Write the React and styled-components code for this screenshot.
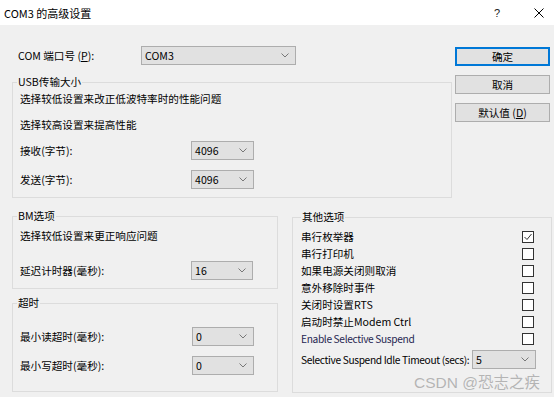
import React from 'react';
import styled, { createGlobalStyle } from 'styled-components';

const GlobalStyle = createGlobalStyle`
  html, body {
    margin: 0;
    padding: 0;
    background: #f0f0f0;
  }
  body {
    font-family: "Noto Sans CJK SC", "Noto Sans", sans-serif;
    font-size: 10.6px;
    color: #000;
  }
`;

const Window = styled.div`
  position: relative;
  width: 554px;
  height: 397px;
  background: #f0f0f0;
  overflow: hidden;
`;

const TitleBar = styled.div`
  height: 25px;
  background: #fff;
  display: flex;
  align-items: center;
  padding-left: 4px;
  font-size: 11px;
`;

const Title = styled.div`
  flex: 1;
`;

const TitleButton = styled.div`
  width: 30px;
  height: 25px;
  display: flex;
  align-items: center;
  justify-content: center;
  margin-right: ${props => props.$gap || 0}px;
  font-family: "Liberation Sans", sans-serif;
  font-size: 11px;
  color: #222;
`;

const Body = styled.div`
  padding: 0 2px 0 12px;
`;

const TopRow = styled.div`
  display: flex;
`;

const TopLeft = styled.div`
  width: 440px;
`;

const ComRow = styled.div`
  display: flex;
  align-items: center;
  height: 19px;
  margin-top: 21px;
  padding-left: 6px;
`;

const Label = styled.div`
  width: ${props => props.$width}px;
  flex-shrink: 0;
`;

const Latin = styled.span`
  white-space: nowrap;
  font-size: 10.2px;
  letter-spacing: -0.35px;
`;

const SelectBox = styled.div`
  width: ${props => props.$width}px;
  height: 19px;
  flex-shrink: 0;
  box-sizing: border-box;
  background: #e1e1e1;
  border: 1px solid #adadad;
  display: flex;
  align-items: center;
  justify-content: space-between;
  padding: 0 6px 0 3px;
  margin-left: ${props => (props.$push ? 'auto' : '0')};
  margin-right: ${props => props.$mr || 0}px;
`;

const Group = styled.fieldset`
  margin: ${props => props.$mt || 0}px 0 0 0;
  padding: 0 ${props => props.$pr || 7}px ${props => props.$pb}px ${props => props.$pl || 7}px;
  border: 1px solid #dcdcdc;
  min-width: 0;
`;

const Legend = styled.legend`
  padding: 0 1px;
  margin-left: ${props => props.$offset}px;
  line-height: 16px;
`;

const Line = styled.div`
  line-height: 18px;
  margin-top: ${props => props.$mt}px;
`;

const FieldRow = styled.div`
  display: flex;
  align-items: center;
  height: 19px;
  margin-top: ${props => props.$mt}px;
`;

const ButtonCol = styled.div`
  display: flex;
  flex-direction: column;
  gap: 9px;
  margin: 22px 0 0 3px;
`;

const Button = styled.div`
  width: 95px;
  height: 19px;
  box-sizing: border-box;
  background: #e1e1e1;
  border: 1px solid ${props => (props.$default ? '#0078d7' : '#adadad')};
  box-shadow: ${props => (props.$default ? 'inset 0 0 0 1px #0078d7' : 'none')};
  display: flex;
  align-items: center;
  justify-content: center;
`;

const BottomRow = styled.div`
  display: flex;
  margin-top: 10px;
`;

const BottomLeft = styled.div`
  width: 266px;
`;

const BottomRight = styled.div`
  width: 260px;
  margin: 1px 0 0 14px;
`;

const OptionList = styled.div`
  padding-top: 3px;
`;

const OptionRow = styled.div`
  height: 17px;
  display: flex;
  align-items: center;
  justify-content: space-between;
  color: ${props => props.$color || '#000'};
`;

const Check = styled.div`
  width: 12px;
  height: 12px;
  box-sizing: border-box;
  border: 1px solid #333;
  background: #fff;
  display: flex;
  align-items: center;
  justify-content: center;
`;

const Watermark = styled.div`
  position: absolute;
  right: 14px;
  bottom: 5px;
  font-family: "Liberation Sans", "Noto Sans CJK SC", sans-serif;
  font-size: 15.5px;
  line-height: 18px;
  color: rgba(140, 140, 140, 0.6);
`;

const Chevron = () => (
  <svg width="8" height="5" viewBox="0 0 8 5">
    <polyline points="0.5,0.5 4,4 7.5,0.5" fill="none" stroke="#777" strokeWidth="1" />
  </svg>
);

const Select = ({ value, width, ...rest }) => (
  <SelectBox $width={width} {...rest}>
    <span>{value}</span>
    <Chevron />
  </SelectBox>
);

const CheckBox = ({ checked }) => (
  <Check>
    {checked && (
      <svg width="10" height="10" viewBox="0 0 10 10">
        <polyline points="1.5,5 4,7.5 8.5,2" fill="none" stroke="#333" strokeWidth="1" />
      </svg>
    )}
  </Check>
);

const options = [
  { label: '串行枚举器', checked: true },
  { label: '串行打印机' },
  { label: '如果电源关闭则取消' },
  { label: '意外移除时事件' },
  { label: '关闭时设置RTS' },
  { label: '启动时禁止Modem Ctrl' },
  { label: 'Enable Selective Suspend', color: '#262650', latin: true },
];

const App = () => {
  return (
    <Window>
      <GlobalStyle />
      <TitleBar>
        <Title>COM3 的高级设置</Title>
        <TitleButton $gap={12}>?</TitleButton>
        <TitleButton>
          <svg width="10" height="10" viewBox="0 0 10 10">
            <path d="M0.5 0.5 L9.5 9.5 M9.5 0.5 L0.5 9.5" stroke="#000" strokeWidth="1" />
          </svg>
        </TitleButton>
      </TitleBar>
      <Body>
        <TopRow>
          <TopLeft>
            <ComRow>
              <Label $width={123}>COM 端口号 (<u>P</u>):</Label>
              <Select value="COM3" width={155} />
            </ComRow>
            <Group $mt={9} $pb={8}>
              <Legend $offset={-3}>USB传输大小</Legend>
              <Line $mt={0}>选择较低设置来改正低波特率时的性能问题</Line>
              <Line $mt={8}>选择较高设置来提高性能</Line>
              <FieldRow $mt={7}>
                <Label $width={171}>接收(字节):</Label>
                <Select value="4096" width={63} />
              </FieldRow>
              <FieldRow $mt={10}>
                <Label $width={171}>发送(字节):</Label>
                <Select value="4096" width={63} />
              </FieldRow>
            </Group>
          </TopLeft>
          <ButtonCol>
            <Button $default>确定</Button>
            <Button>取消</Button>
            <Button>默认值 (<u>D</u>)</Button>
          </ButtonCol>
        </TopRow>
        <BottomRow>
          <BottomLeft>
            <Group $pb={8}>
              <Legend $offset={-3}>BM选项</Legend>
              <Line $mt={3}>选择较低设置来更正响应问题</Line>
              <FieldRow $mt={16}>
                <Label $width={171}>延迟计时器(毫秒):</Label>
                <Select value="16" width={62} />
              </FieldRow>
            </Group>
            <Group $mt={6} $pb={16}>
              <Legend $offset={-3}>超时</Legend>
              <FieldRow $mt={16}>
                <Label $width={172}>最小读超时(毫秒):</Label>
                <Select value="0" width={62} />
              </FieldRow>
              <FieldRow $mt={10}>
                <Label $width={172}>最小写超时(毫秒):</Label>
                <Select value="0" width={62} />
              </FieldRow>
            </Group>
          </BottomLeft>
          <BottomRight>
            <Group $pl={8} $pr={17} $pb={23}>
              <Legend $offset={0}>其他选项</Legend>
              <OptionList>
                {options.map(o => (
                  <OptionRow key={o.label} $color={o.color}>
                    {o.latin ? <Latin>{o.label}</Latin> : <span>{o.label}</span>}
                    <CheckBox checked={o.checked} />
                  </OptionRow>
                ))}
              </OptionList>
              <FieldRow $mt={3}>
                <Latin>Selective Suspend Idle Timeout (secs):</Latin>
                <Select value="5" width={64} $push $mr={-2} />
              </FieldRow>
            </Group>
          </BottomRight>
        </BottomRow>
      </Body>
      <Watermark>CSDN @恐志之疾</Watermark>
    </Window>
  );
};

export default App;
